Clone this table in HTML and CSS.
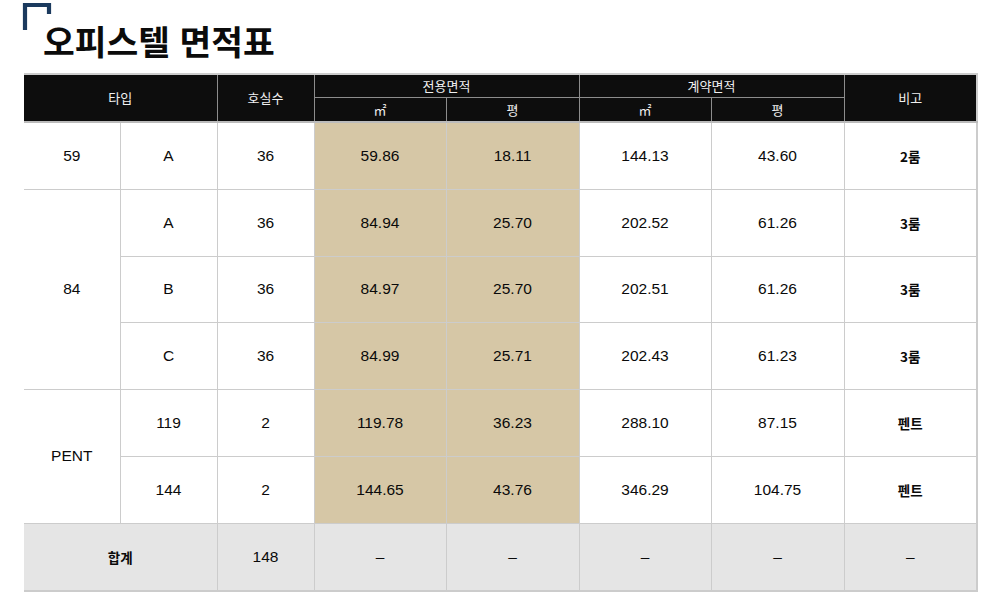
FILE: index.html
```html
<!DOCTYPE html>
<html lang="ko">
<head>
<meta charset="utf-8">
<title>오피스텔 면적표</title>
<link rel="stylesheet" href="styles.css">
</head>
<body>
<div class="page">
  <h1 class="title">
    <svg class="title-mark" width="30" height="30" viewBox="0 0 30 30" aria-hidden="true">
      <path d="M3 28 V3 H27 V12" fill="none" stroke="#1b3a5e" stroke-width="4.2"/>
    </svg>
    오피스텔 면적표
  </h1>
  <table class="area">
    <colgroup>
      <col class="c96"><col class="c97"><col class="c97"><col class="c132"><col class="c133"><col class="c132"><col class="c133"><col class="c133">
    </colgroup>
    <thead>
      <tr class="hr1">
        <th colspan="2" rowspan="2">타입</th>
        <th rowspan="2">호실수</th>
        <th colspan="2">전용면적</th>
        <th colspan="2">계약면적</th>
        <th rowspan="2">비고</th>
      </tr>
      <tr class="hr2">
        <th>㎡</th><th>평</th><th>㎡</th><th>평</th>
      </tr>
    </thead>
    <tbody>
      <tr>
        <td class="first">59</td><td>A</td><td>36</td><td class="ex">59.86</td><td class="ex">18.11</td><td>144.13</td><td>43.60</td><td class="ko">2룸</td>
      </tr>
      <tr>
        <td class="first" rowspan="3">84</td><td>A</td><td>36</td><td class="ex">84.94</td><td class="ex">25.70</td><td>202.52</td><td>61.26</td><td class="ko">3룸</td>
      </tr>
      <tr>
        <td>B</td><td>36</td><td class="ex">84.97</td><td class="ex">25.70</td><td>202.51</td><td>61.26</td><td class="ko">3룸</td>
      </tr>
      <tr>
        <td>C</td><td>36</td><td class="ex">84.99</td><td class="ex">25.71</td><td>202.43</td><td>61.23</td><td class="ko">3룸</td>
      </tr>
      <tr>
        <td class="first" rowspan="2">PENT</td><td>119</td><td>2</td><td class="ex">119.78</td><td class="ex">36.23</td><td>288.10</td><td>87.15</td><td class="ko">펜트</td>
      </tr>
      <tr>
        <td>144</td><td>2</td><td class="ex">144.65</td><td class="ex">43.76</td><td>346.29</td><td>104.75</td><td class="ko">펜트</td>
      </tr>
    </tbody>
    <tfoot>
      <tr>
        <td class="first ko" colspan="2">합계</td><td>148</td><td>–</td><td>–</td><td>–</td><td>–</td><td>–</td>
      </tr>
    </tfoot>
  </table>
</div>
</body>
</html>
```
FILE: styles.css
```css
html, body {
  margin: 0;
  padding: 0;
  background: #ffffff;
}

.page {
  padding: 0 0 0 24px;
  font-family: "Liberation Sans", "Noto Sans CJK KR", Arial, sans-serif;
  color: #111111;
}

.title {
  position: relative;
  margin: 0 0 13px 0;
  padding: 20px 0 0 19px;
  font-family: "Noto Sans CJK KR", sans-serif;
  font-size: 34.5px;
  font-weight: 700;
  line-height: 40px;
  color: #0b0b0b;
  letter-spacing: 0;
}

.title-mark {
  position: absolute;
  left: -2px;
  top: 2px;
}

.area {
  width: 953px;
  table-layout: fixed;
  border-collapse: collapse;
  border-top: 2px solid #cccccc;
  border-right: 2px solid #cccccc;
  border-bottom: 2px solid #cccccc;
}

.c96 { width: 96px; }
.c97 { width: 97px; }
.c132 { width: 132px; }
.c133 { width: 133px; }

.area th {
  background: #0d0d0d;
  color: #f0f0f0;
  font-family: "Noto Sans CJK KR", sans-serif;
  font-size: 13px;
  font-weight: 400;
  padding: 0;
  border: 1px solid #8c8c8c;
  line-height: 18px;
}

.area thead tr:first-child th {
  border-top: 2px solid #cccccc;
}

.area thead th:first-child {
  border-left: none;
}

.hr1 th {
  height: 22px;
}

.hr2 th {
  height: 23px;
  border-bottom: 2px solid #bbbbbb;
}

.area thead th[rowspan] {
  border-bottom: 2px solid #bbbbbb;
}

.area td {
  height: 65.8px;
  padding: 0;
  text-align: center;
  vertical-align: middle;
  font-size: 15.5px;
  color: #0a0a0a;
  border: 1px solid #cccccc;
  background: #ffffff;
}

.area td.first {
  border-left: none;
}

.area td.ex {
  background: #d6c7a6;
}

.area td.ko {
  font-family: "Noto Sans CJK KR", sans-serif;
  font-size: 13.5px;
  font-weight: 700;
}

.area tfoot td {
  background: #e5e5e5;
}
```
